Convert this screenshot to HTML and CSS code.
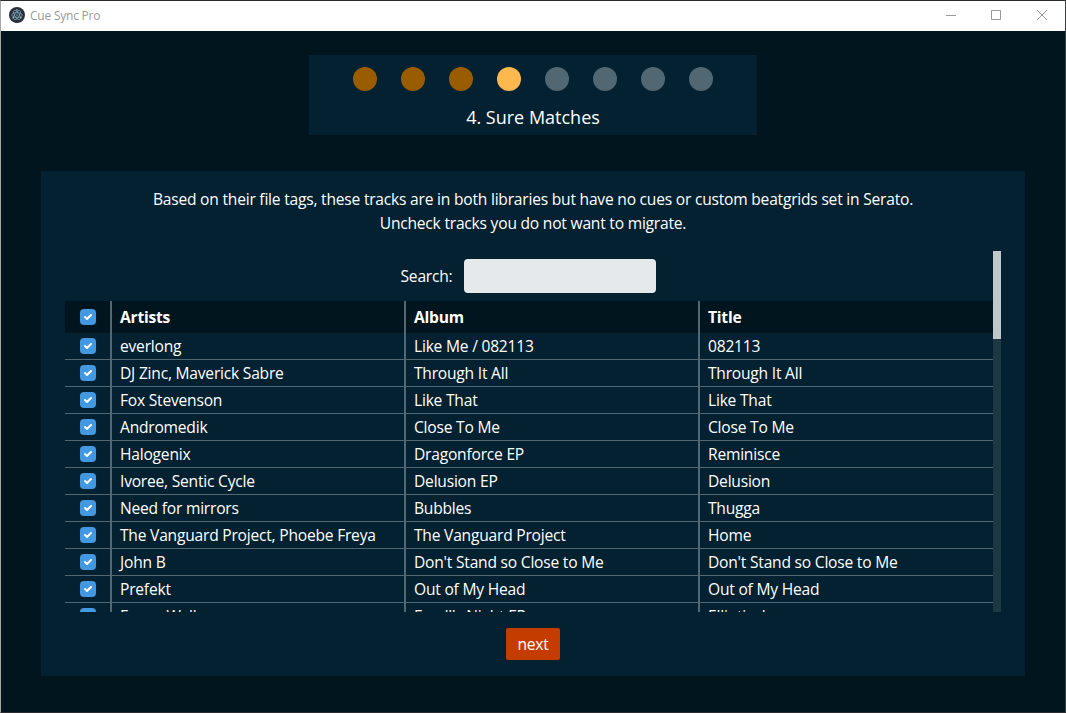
FILE: index.html
```html
<!DOCTYPE html>
<html lang="en">
<head>
<meta charset="utf-8">
<title>Cue Sync Pro</title>
<link rel="stylesheet" href="styles.css">
</head>
<body>
<div class="window">
  <header class="titlebar">
    <svg class="app-icon" width="16" height="16" viewBox="0 0 16 16">
      <circle cx="8" cy="8" r="8" fill="#2b2e3a"/>
      <g fill="none" stroke="#9feaf9" stroke-width=".65" opacity=".75">
        <ellipse cx="8" cy="8" rx="5.2" ry="2.3"/>
        <ellipse cx="8" cy="8" rx="5.2" ry="2.3" transform="rotate(60 8 8)"/>
        <ellipse cx="8" cy="8" rx="5.2" ry="2.3" transform="rotate(120 8 8)"/>
      </g>
      <g fill="#9feaf9" opacity=".85"><circle cx="8" cy="8" r=".7"/><circle cx="4" cy="10.7" r=".7"/><circle cx="12" cy="10.7" r=".7"/><circle cx="8" cy="2.8" r=".7"/></g>
    </svg>
    <span class="app-title">Cue Sync Pro</span>
    <div class="controls">
      <svg width="10" height="10" viewBox="0 0 10 10"><path d="M0 5.5H10"/></svg>
      <svg class="maximize" width="10" height="10" viewBox="0 0 10 10"><path d="M.5 .5H9.5V9.5H.5Z"/></svg>
      <svg width="10" height="10" viewBox="0 0 10 10"><path d="M0 0L10 10M10 0L0 10"/></svg>
    </div>
  </header>
  <main class="content">
    <section class="stepper">
      <div class="dots">
        <i class="dot done"></i><i class="dot done"></i><i class="dot done"></i><i class="dot current"></i><i class="dot"></i><i class="dot"></i><i class="dot"></i><i class="dot"></i>
      </div>
      <h1 class="step-title">4. Sure Matches</h1>
    </section>
    <section class="panel">
      <p class="intro">Based on their file tags, these tracks are in both libraries but have no cues or custom beatgrids set in Serato.<br>Uncheck tracks you do not want to migrate.</p>
      <div class="scroll">
        <div class="list">
          <label class="search"><span>Search:</span><input class="search-input" type="text"></label>
          <div class="tracks" id="tracks"></div>
        </div>
        <div class="track-bar"><div class="thumb"></div></div>
      </div>
      <button class="next">next</button>
    </section>
  </main>
</div>
<script src="script.js"></script>
</body>
</html>
```
FILE: styles.css
```css
* { box-sizing: border-box; }
body { margin: 0; font-family: "Open Sans", "Noto Sans", sans-serif; font-size: 15.6px; letter-spacing: -.22px; color: #fff; }
.window { width: 1066px; height: 713px; display: flex; flex-direction: column; background: #00151d; border: 1px solid #2b2b30; border-left-color: #a6a6a6; border-right-color: #3c3e40; overflow: hidden; }
.titlebar { height: 30px; flex: none; display: flex; align-items: center; padding: 0 18px 2px 8px; background: #fff; }
.app-icon { display: block; }
.app-title { margin: 2px 0 0 5px; font-size: 12px; line-height: 16px; color: #999; white-space: nowrap; }
.controls { margin-left: auto; display: flex; gap: 35px; }
.controls svg { display: block; fill: none; stroke: #999; stroke-width: 1; }
.controls .maximize { margin-right: 1px; }
.content { flex: 1; display: flex; flex-direction: column; align-items: center; padding: 24px 40px 36px; }
.stepper { width: 448px; height: 80px; padding-top: 12px; background: #032130; }
.dots { display: flex; justify-content: center; gap: 24px; }
.dot { width: 24px; height: 24px; border-radius: 50%; background: #516772; }
.dot.done { background: #995c00; }
.dot.current { background: #ffb84d; }
.step-title { margin: 12px 0 0; font-size: 18px; line-height: 28px; font-weight: 400; letter-spacing: 0; text-align: center; }
.panel { width: 984px; height: 505px; margin-top: 36px; padding: 16px 24px; display: flex; flex-direction: column; align-items: center; background: #032130; }
.intro { margin: 0; line-height: 24px; text-align: center; white-space: nowrap; }
.scroll { width: 936px; height: 361px; margin-top: 16px; display: flex; flex: none; }
.list { width: 928px; overflow: hidden; }
.search { display: flex; justify-content: center; align-items: center; gap: 12px; height: 50px; padding-right: 1px; }
.search-input { width: 192px; height: 34px; border: 0; border-radius: 4px; background: #e5e9ec; }
.row { display: grid; grid-template-columns: 45px 294px 294px 295px; height: 27px; }
.row.head { height: 32px; background: #00151d; font-weight: 700; }
.cell { display: flex; align-items: center; padding-left: 8px; line-height: 24px; white-space: nowrap; border-left: 2px solid #516772; border-bottom: 1px solid #516772; }
.cell.pick { padding-left: 15px; border-left: 0; }
.head .cell { border-bottom: 0; }
.check { display: block; width: 16px; height: 16px; border-radius: 4px; background: #4299e1; }
.check svg { display: block; }
.track-bar { width: 8px; background: #1c3843; }
.thumb { height: 88px; background: #bfc7cb; }
.next { width: 54px; height: 32px; margin-top: 16px; padding: 0; border: 0; border-radius: 2px; background: #c53c00; color: #fff; font: inherit; line-height: 32px; letter-spacing: inherit; }
```
FILE: script.js
```js
const tracks = [
  ["everlong", "Like Me / 082113", "082113"],
  ["DJ Zinc, Maverick Sabre", "Through It All", "Through It All"],
  ["Fox Stevenson", "Like That", "Like That"],
  ["Andromedik", "Close To Me", "Close To Me"],
  ["Halogenix", "Dragonforce EP", "Reminisce"],
  ["Ivoree, Sentic Cycle", "Delusion EP", "Delusion"],
  ["Need for mirrors", "Bubbles", "Thugga"],
  ["The Vanguard Project, Phoebe Freya", "The Vanguard Project", "Home"],
  ["John B", "Don't Stand so Close to Me", "Don't Stand so Close to Me"],
  ["Prefekt", "Out of My Head", "Out of My Head"],
  ["Fanny Walker", "Feedl's Night EP", "Elliptical"]
];
const check = '<span class="check"><svg width="16" height="16" viewBox="0 0 16 16"><path fill="#fff" d="M5.707 7.293a1 1 0 0 0-1.414 1.414l2 2a1 1 0 0 0 1.414 0l4-4a1 1 0 0 0-1.414-1.414L7 8.586 5.707 7.293z"/></svg></span>';
const row = (cells, kind) =>
  `<div class="row ${kind}"><div class="cell pick">${check}</div>` +
  cells.map(text => `<div class="cell"><span>${text}</span></div>`).join("") + "</div>";
document.getElementById("tracks").innerHTML =
  row(["Artists", "Album", "Title"], "head") + tracks.map(cells => row(cells, "")).join("");
```
